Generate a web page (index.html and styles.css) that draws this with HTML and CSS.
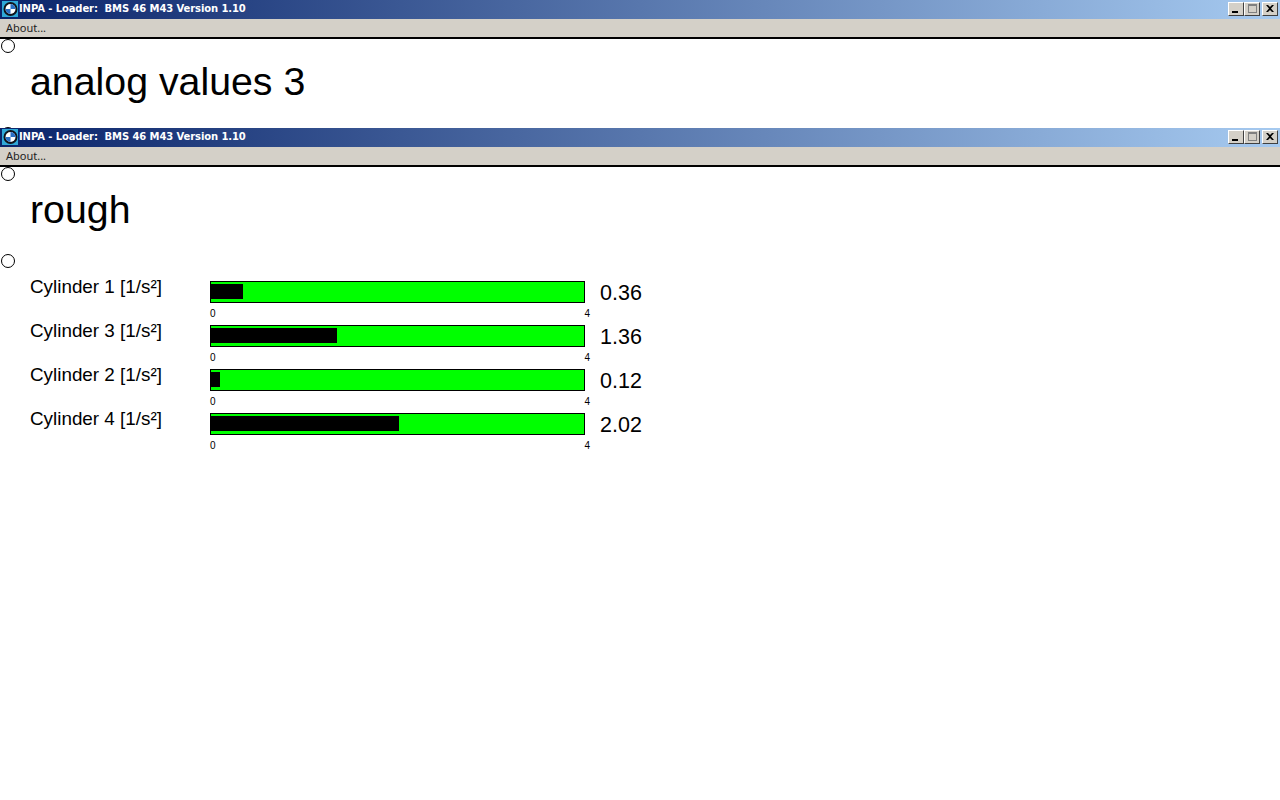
FILE: index.html
```html
<!DOCTYPE html>
<html lang="en">
<head>
    <meta charset="UTF-8">
    <meta name="viewport" content="width=device-width, initial-scale=1.0">
    <title>INPA - Loader</title>
    <link rel="stylesheet" href="styles.css">
</head>
<body>
    <div class="window window-top">
        <div class="titlebar">
            <svg class="app-icon" width="16" height="16" viewBox="0 0 16 16">
                <rect width="16" height="16" fill="#2fa8d8"/>
                <circle cx="8.5" cy="8" r="7" fill="#10141c"/>
                <circle cx="8.5" cy="8" r="5" fill="#fff"/>
                <path d="M8.5 8V3A5 5 0 0 1 13.500 8ZM8.500 8V13A5 5 0 0 1 3.500 8Z" fill="#2a6fc4"/>
            </svg>
            <span class="title-text">INPA - Loader:&nbsp; BMS 46 M43 Version 1.10</span>
            <div class="win-buttons">
                <div class="win-btn"><span class="glyph-min"></span></div>
                <div class="win-btn"><span class="glyph-max"></span></div>
                <div class="win-btn close-btn">
                    <svg width="8" height="7" viewBox="0 0 8 7"><path d="M0 0h2l2 2 2-2h2L5 3.5 8 7H6L4 5 2 7H0l3-3.5z" fill="#000"/></svg>
                </div>
            </div>
        </div>
        <div class="menubar">About...</div>
        <div class="content">
            <div class="radio"></div>
            <h1>analog values 3</h1>
            <div class="radio"></div>
        </div>
    </div>

    <div class="window">
        <div class="titlebar">
            <svg class="app-icon" width="16" height="16" viewBox="0 0 16 16">
                <rect width="16" height="16" fill="#2fa8d8"/>
                <circle cx="8.5" cy="8" r="7" fill="#10141c"/>
                <circle cx="8.5" cy="8" r="5" fill="#fff"/>
                <path d="M8.5 8V3A5 5 0 0 1 13.500 8ZM8.500 8V13A5 5 0 0 1 3.500 8Z" fill="#2a6fc4"/>
            </svg>
            <span class="title-text">INPA - Loader:&nbsp; BMS 46 M43 Version 1.10</span>
            <div class="win-buttons">
                <div class="win-btn"><span class="glyph-min"></span></div>
                <div class="win-btn"><span class="glyph-max"></span></div>
                <div class="win-btn close-btn">
                    <svg width="8" height="7" viewBox="0 0 8 7"><path d="M0 0h2l2 2 2-2h2L5 3.5 8 7H6L4 5 2 7H0l3-3.5z" fill="#000"/></svg>
                </div>
            </div>
        </div>
        <div class="menubar">About...</div>
        <div class="content">
            <div class="radio"></div>
            <h1>rough</h1>
            <div class="radio radio-second"></div>
            <div class="rows">
                <div class="row">
                    <div class="row-label">Cylinder 1 [1/s²]</div>
                    <div class="gauge">
                        <div class="bar"><div class="fill" style="width: 32px"></div></div>
                        <div class="scale"><span>0</span><span>4</span></div>
                    </div>
                    <div class="row-value">0.36</div>
                </div>
                <div class="row">
                    <div class="row-label">Cylinder 3 [1/s²]</div>
                    <div class="gauge">
                        <div class="bar"><div class="fill" style="width: 126px"></div></div>
                        <div class="scale"><span>0</span><span>4</span></div>
                    </div>
                    <div class="row-value">1.36</div>
                </div>
                <div class="row">
                    <div class="row-label">Cylinder 2 [1/s²]</div>
                    <div class="gauge">
                        <div class="bar"><div class="fill" style="width: 9px"></div></div>
                        <div class="scale"><span>0</span><span>4</span></div>
                    </div>
                    <div class="row-value">0.12</div>
                </div>
                <div class="row">
                    <div class="row-label">Cylinder 4 [1/s²]</div>
                    <div class="gauge">
                        <div class="bar"><div class="fill" style="width: 188px"></div></div>
                        <div class="scale"><span>0</span><span>4</span></div>
                    </div>
                    <div class="row-value">2.02</div>
                </div>
            </div>
        </div>
    </div>
</body>
</html>
```

FILE: styles.css
```css
html, body {
    margin: 0;
    height: 100%;
    overflow: hidden;
    background: #fff;
}
body {
    font-family: "Liberation Sans", Arial, sans-serif;
    color: #000;
}
.window-top {
    height: 128px;
    overflow: hidden;
}
.titlebar {
    display: flex;
    align-items: center;
    height: 17px;
    padding: 0 2px 2px 2px;
    background: linear-gradient(to right, #0a246a, #a6caf0);
}
.app-icon {
    flex: none;
    margin-right: 1px;
}
.title-text {
    font-family: "DejaVu Sans", Verdana, sans-serif;
    font-size: 10px;
    font-weight: bold;
    letter-spacing: -0.1px;
    color: #fff;
    white-space: pre;
}
.win-buttons {
    display: flex;
    margin-left: auto;
}
.win-btn {
    display: flex;
    align-items: center;
    justify-content: center;
    box-sizing: border-box;
    width: 16px;
    height: 14px;
    background: #d4d0c8;
    border: 1px solid;
    border-color: #fff #404040 #404040 #fff;
}
.close-btn {
    margin-left: 2px;
}
.glyph-min {
    width: 6px;
    height: 2px;
    margin: 6px 3px 0 0;
    background: #000;
}
.glyph-max {
    box-sizing: border-box;
    width: 9px;
    height: 9px;
    border: 1px solid #808080;
    border-top-width: 2px;
}
.menubar {
    box-sizing: border-box;
    height: 20px;
    padding: 2px 0 0 6px;
    font-family: "Noto Sans", Tahoma, sans-serif;
    font-size: 11px;
    line-height: 14px;
    color: #222;
    background: #d4d0c8;
    border-bottom: 2px solid #000;
}
.radio {
    box-sizing: border-box;
    width: 14px;
    height: 14px;
    margin-left: 1px;
    border: 1px solid #000;
    border-radius: 50%;
}
h1 {
    margin: 6px 0 0 30px;
    font-size: 39.3px;
    font-weight: normal;
    line-height: 44px;
}
.window-top .radio:last-child {
    margin-top: 24px;
}
.radio-second {
    margin-top: 23px;
}
.rows {
    margin: 9px 0 0 30px;
}
.row {
    display: flex;
    height: 44px;
}
.row-label {
    width: 180px;
    margin-top: -2px;
    font-size: 18.85px;
    line-height: 24px;
}
.gauge {
    width: 375px;
    padding-top: 4px;
}
.bar {
    box-sizing: border-box;
    height: 22px;
    background: #00ff00;
    border: 1px solid #000;
    padding-top: 2px;
}
.fill {
    height: 15px;
    background: #000;
}
.scale {
    display: flex;
    justify-content: space-between;
    margin-top: 5px;
    width: 380px;
    font-size: 10px;
    line-height: 12px;
}
.row-value {
    margin-left: 15px;
    padding-top: 4px;
    font-size: 21.5px;
    line-height: 25px;
}
```
